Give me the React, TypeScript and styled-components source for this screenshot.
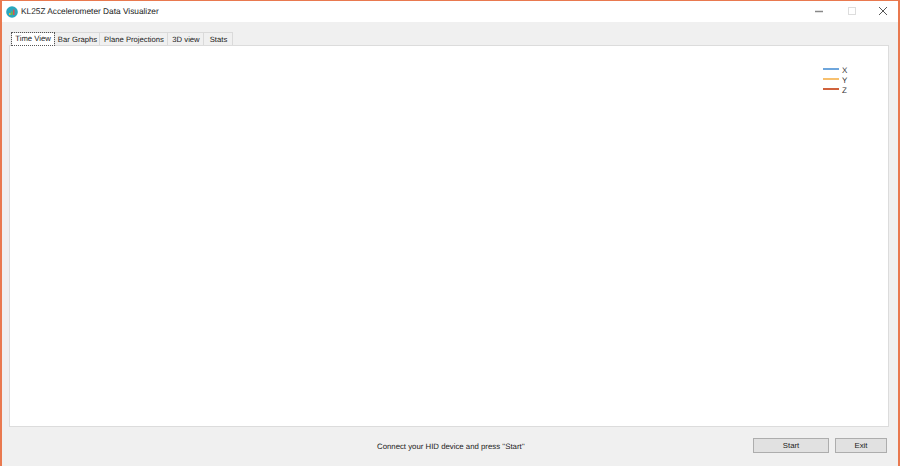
import React from "react";
import styled, { createGlobalStyle } from "styled-components";

const Global = createGlobalStyle`
  html, body { margin: 0; padding: 0; background: #f0f0f0; }
  body { font-family: "Liberation Sans", Arial, sans-serif; text-rendering: geometricPrecision; }
`;

const Window = styled.div`
  width: 900px; height: 466px; box-sizing: border-box;
  border: 1px solid #e9794f; border-bottom: none; border-left-width: 2px; border-right-width: 2px;
  background: #f0f0f0; display: flex; flex-direction: column; overflow: hidden;
`;
const TitleBar = styled.div`
  height: 21px; background: #fff; display: flex; align-items: center; flex: none;
  padding-left: 4px;
`;
const TitleText = styled.span`font-size: 8.3px; margin-left: 3px; flex: 1; color: #222; position: relative; top: -1px;`;
const Controls = styled.div`display: flex; align-items: center;`;
const Control = styled.div<{ $w: number }>`
  width: ${p => p.$w}px; display: flex; justify-content: center; align-items: center; height: 21px;
`;
const Body = styled.div`
  flex: 1; display: flex; flex-direction: column; padding: 10px 9px 0 7px; min-height: 0;
`;
const Tabs = styled.div`display: flex; height: 13px; padding-left: 2px; align-items: flex-end; flex: none;`;
const Tab = styled.div<{ $w: number; $active?: boolean }>`
  width: ${p => p.$w}px; box-sizing: border-box;
  height: ${p => (p.$active ? 14 : 13)}px;
  margin-bottom: ${p => (p.$active ? -1 : 0)}px;
  padding-left: ${p => (p.$active ? 0 : 1)}px;
  background: ${p => (p.$active ? "#fff" : "#f0f0f0")};
  border: 1px solid #dadada; border-bottom: none; border-left-width: ${p => (p.$active ? 1 : 0)}px;
  font-size: 7.7px; line-height: ${p => (p.$active ? 12 : 13)}px; text-align: center; color: #222; white-space: nowrap;
  position: relative; z-index: ${p => (p.$active ? 1 : 0)};
  outline: ${p => (p.$active ? "1px dotted #555" : "none")};
  outline-offset: -1px;
`;
const Panel = styled.div`
  height: 382px; flex: none; box-sizing: border-box; background: #fff;
  border: 1px solid #dcdcdc; position: relative;
`;
const Legend = styled.div`
  position: absolute; left: 813px; top: 18px; display: flex; flex-direction: column;
`;
const LegendRow = styled.div`display: flex; align-items: center; height: 10px; font-size: 8px; color: #333;`;
const Swatch = styled.span<{ $c: string }>`
  width: 16px; height: 2px; background: ${p => p.$c}; margin-right: 3px;
`;
const LegendLabel = styled.span`position: relative; top: 1px;`;
const Footer = styled.div`
  height: 26px; display: flex; align-items: flex-start; padding-top: 11px; box-sizing: content-box; position: relative; flex: none;
`;
const Message = styled.div`
  position: absolute; left: 368px; top: 14px; font-size: 7.8px; line-height: 12px; color: #222;
`;
const Buttons = styled.div`display: flex; gap: 6px; margin-left: auto; margin-right: 2px;`;
const Button = styled.button<{ $w: number }>`
  width: ${p => p.$w}px; height: 15px; padding: 0; box-sizing: border-box;
  background: #e1e1e1; border: 1px solid #adadad; font: 7.8px "Liberation Sans", Arial, sans-serif; color: #222;
`;

const series = [["X", "#6ea6dc"], ["Y", "#f7c06e"], ["Z", "#d0623c"]];
const tabs: [string, number][] = [["Time View", 44], ["Bar Graphs", 45], ["Plane Projections", 68], ["3D view", 36], ["Stats", 29]];

export default function App() {
  return (
    <Window>
      <Global />
      <TitleBar>
        <svg width="12" height="12" viewBox="0 0 12 12">
          <circle cx="6" cy="6" r="5.8" fill="#2aa7bd" />
          <rect x="3" y="7" width="1.5" height="2" fill="#e8b23a" />
          <rect x="5" y="5.5" width="1.5" height="3.5" fill="#6cb84a" />
          <rect x="7" y="3.5" width="1.5" height="5.5" fill="#d9534f" />
        </svg>
        <TitleText>KL25Z Accelerometer Data Visualizer</TitleText>
        <Controls>
          <Control $w={33}>
            <svg width="10" height="10" viewBox="0 0 10 10"><path d="M1 4.5h8" stroke="#888" strokeWidth="1.5" /></svg>
          </Control>
          <Control $w={33}>
            <svg width="10" height="10" viewBox="0 0 10 10"><rect x="1.5" y="0.5" width="7" height="7" fill="#fff" stroke="#ddd" /></svg>
          </Control>
          <Control $w={30}>
            <svg width="10" height="10" viewBox="0 0 10 10"><path d="M1 0l8 8M9 0l-8 8" stroke="#555" strokeWidth="1" /></svg>
          </Control>
        </Controls>
      </TitleBar>
      <Body>
        <Tabs>
          {tabs.map(([t, w], i) => <Tab key={t} $w={w} $active={i === 0}>{t}</Tab>)}
        </Tabs>
        <Panel>
          <Legend>
            {series.map(([n, c]) => <LegendRow key={n}><Swatch $c={c} /><LegendLabel>{n}</LegendLabel></LegendRow>)}
          </Legend>
        </Panel>
        <Footer>
          <Message>Connect your HID device and press ''Start''</Message>
          <Buttons>
            <Button $w={76}>Start</Button>
            <Button $w={52}>Exit</Button>
          </Buttons>
        </Footer>
      </Body>
    </Window>
  );
}
